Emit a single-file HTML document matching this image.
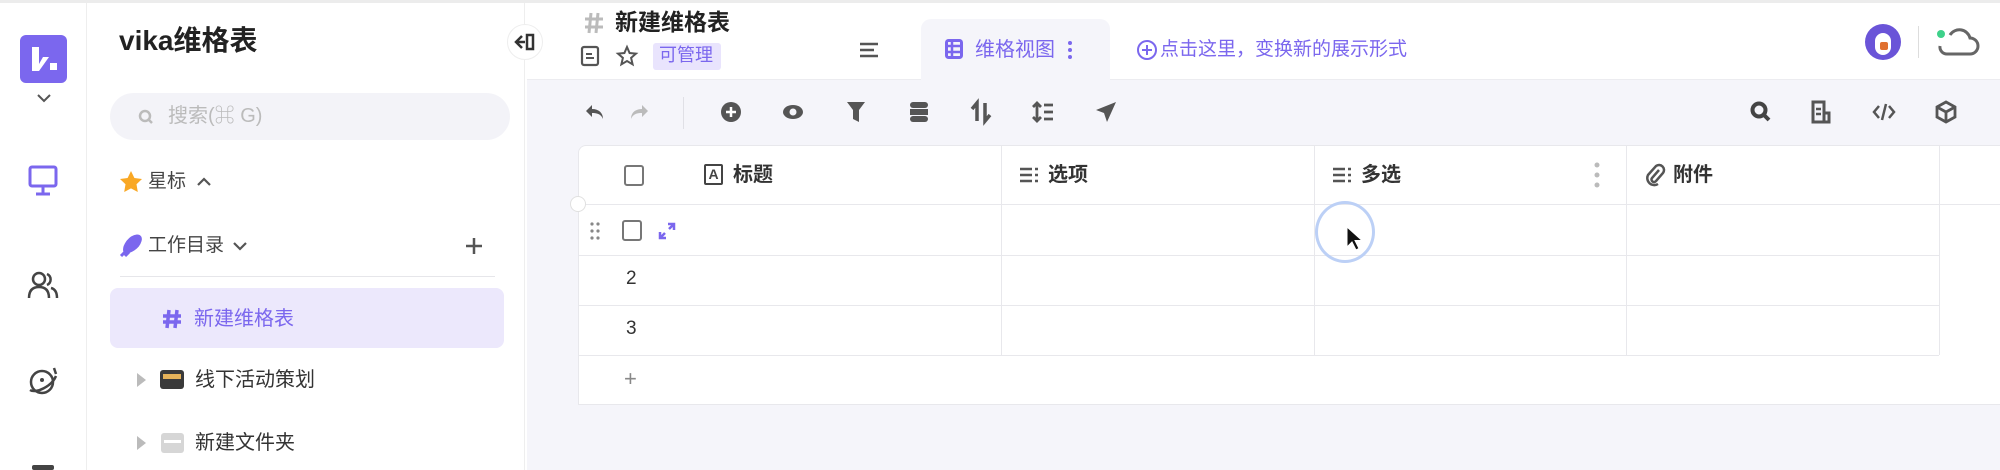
<!DOCTYPE html>
<html><head><meta charset="utf-8"><style>
*{box-sizing:border-box;margin:0;padding:0}
body{width:2000px;height:470px;overflow:hidden;background:#fff;font-family:"Liberation Sans","Noto Sans CJK SC",sans-serif;position:relative;color:#333}
.a{position:absolute}
.t{position:absolute;white-space:nowrap;line-height:1.2}
svg{position:absolute;overflow:visible}
</style></head><body>
<div class="a" style="left:0;top:0;width:2000px;height:3px;background:#ececec"></div>
<!-- rail -->
<div class="a" style="left:0;top:3px;width:87px;height:467px;background:#fff;border-right:1px solid #eee"></div>
<div class="a" style="left:20px;top:35px;width:47px;height:48px;background:#7b67ee;border-radius:6px"></div>
<svg style="left:20px;top:35px" width="47" height="48"><path d="M12 12v24h7l10-14h-6l-4 7V12z" fill="#fff"/><rect x="30" y="28" width="7" height="7" fill="#fff"/></svg>
<svg style="left:36px;top:93px" width="16" height="10"><path d="M2 2l6 6 6-6" stroke="#555" stroke-width="2" fill="none"/></svg>
<svg style="left:28px;top:165px" width="32" height="32"><rect x="2" y="2" width="26" height="19" rx="2" stroke="#7b67ee" stroke-width="3" fill="none"/><path d="M15 21v7M8 29h14" stroke="#7b67ee" stroke-width="3"/></svg>
<svg style="left:27px;top:270px" width="34" height="30"><circle cx="12" cy="9" r="6" stroke="#444" stroke-width="2.5" fill="none"/><path d="M2 28c0-8 4-11 10-11s10 3 10 11M20 4a6 6 0 0 1 0 11M24 18c4 1 6 4 6 10" stroke="#444" stroke-width="2.5" fill="none"/></svg>
<svg style="left:27px;top:364px" width="34" height="34"><circle cx="15" cy="18" r="11" stroke="#444" stroke-width="2.5" fill="none"/><path d="M3 26c6 4 22-4 26-14M27 4l2 6" stroke="#444" stroke-width="2.5" fill="none"/><circle cx="15" cy="16" r="2" fill="#444"/></svg>
<div class="a" style="left:32px;top:465px;width:22px;height:5px;background:#444;border-radius:2px"></div>
<!-- sidebar -->
<div class="a" style="left:87px;top:3px;width:438px;height:467px;background:#fff;border-right:1px solid #eee"></div>
<div class="t" style="left:119px;top:24px;font-size:28px;font-weight:bold;color:#222">vika维格表</div>
<div class="a" style="left:110px;top:93px;width:400px;height:47px;background:#f3f3f8;border-radius:24px"></div>
<svg style="left:138px;top:109px" width="16" height="16"><circle cx="7" cy="7" r="5" stroke="#bbb" stroke-width="2.5" fill="none"/><path d="M11 11l3 3" stroke="#bbb" stroke-width="2.5"/></svg>
<div class="t" style="left:168px;top:104px;font-size:20px;color:#bbb">搜索(⌘ G)</div>
<svg style="left:119px;top:170px" width="24" height="24"><path d="M12 1l3.4 7 7.6 1-5.5 5.3 1.3 7.7L12 18.4 5.2 22l1.3-7.7L1 9l7.6-1z" fill="#f9a825"/></svg>
<div class="t" style="left:148px;top:171px;font-size:19px;color:#444">星标</div>
<svg style="left:196px;top:177px" width="16" height="10"><path d="M2 8l6-6 6 6" stroke="#555" stroke-width="2.2" fill="none"/></svg>
<svg style="left:119px;top:234px" width="24" height="24"><path d="M6 18c-2-5 4-15 12-16 3 0 4 2 3 5-2 7-10 11-15 11zM2 22l6-6M6 22l4-4" stroke="#7b67ee" stroke-width="3" fill="#7b67ee"/></svg>
<div class="t" style="left:148px;top:235px;font-size:19px;color:#444">工作目录</div>
<svg style="left:232px;top:241px" width="16" height="10"><path d="M2 2l6 6 6-6" stroke="#555" stroke-width="2.2" fill="none"/></svg>
<svg style="left:465px;top:237px" width="18" height="18"><path d="M9 1v16M1 9h16" stroke="#555" stroke-width="2.5"/></svg>
<div class="a" style="left:120px;top:276px;width:375px;height:1px;background:#e6e6ea"></div>
<div class="a" style="left:110px;top:288px;width:394px;height:60px;background:#ece8fc;border-radius:8px"></div>
<svg style="left:162px;top:309px" width="20" height="20"><path d="M7 1L5 19M15 1l-2 18M1 7h18M1 13h18" stroke="#7b67ee" stroke-width="3.5"/></svg>
<div class="t" style="left:194px;top:307px;font-size:20px;color:#7b67ee">新建维格表</div>
<svg style="left:137px;top:373px" width="10" height="14"><path d="M0 0l9 7-9 7z" fill="#bbb"/></svg>
<div class="a" style="left:160px;top:370px;width:24px;height:19px;background:#3a3a3a;border-radius:3px"></div>
<div class="a" style="left:163px;top:374px;width:18px;height:5px;background:#e6b35a"></div>
<div class="t" style="left:195px;top:368px;font-size:20px;color:#333">线下活动策划</div>
<svg style="left:137px;top:436px" width="10" height="14"><path d="M0 0l9 7-9 7z" fill="#bbb"/></svg>
<div class="a" style="left:161px;top:433px;width:23px;height:20px;background:#d6d6d6;border-radius:3px"></div>
<div class="a" style="left:164px;top:440px;width:17px;height:3px;background:#fff"></div>
<div class="t" style="left:195px;top:431px;font-size:20px;color:#333">新建文件夹</div>
<div class="a" style="left:507px;top:24px;width:36px;height:36px;border-radius:50%;background:#fff;border:1px solid #eee"></div>
<svg style="left:514px;top:33px" width="22" height="18"><path d="M8 3L2 9l6 6M2 9h9" stroke="#333" stroke-width="2.5" fill="none"/><rect x="13" y="2" width="6" height="14" stroke="#333" stroke-width="2.5" fill="none"/></svg>
<!-- main -->
<div class="a" style="left:527px;top:79px;width:1473px;height:391px;background:#f5f5fa;border-top:1px solid #ececf0"></div>
<svg style="left:584px;top:12px" width="20" height="22"><path d="M7 1L5 21M14 1l-2 20M1 7h18M1 15h18" stroke="#bbb" stroke-width="3"/></svg>
<div class="t" style="left:615px;top:9px;font-size:23px;font-weight:bold;color:#222">新建维格表</div>
<svg style="left:580px;top:45px" width="20" height="22"><rect x="2" y="2" width="16" height="18" rx="2" stroke="#555" stroke-width="2.2" fill="none"/><path d="M6 9h6M6 13h8" stroke="#555" stroke-width="2"/></svg>
<svg style="left:616px;top:45px" width="22" height="22"><path d="M11 2l2.6 6 6.4.6-4.9 4.3 1.5 6.4L11 16l-5.6 3.3 1.5-6.4L2 8.6 8.4 8z" stroke="#555" stroke-width="2" fill="none"/></svg>
<div class="a" style="left:653px;top:43px;width:68px;height:27px;background:#e9e4fd;border-radius:3px"></div>
<div class="t" style="left:659px;top:45px;font-size:18px;color:#7b67ee">可管理</div>
<svg style="left:860px;top:42px" width="18" height="16"><path d="M0 2h18M0 8h14M0 14h18" stroke="#555" stroke-width="2.5"/></svg>
<div class="a" style="left:921px;top:19px;width:189px;height:61px;background:#f5f5fa;border-radius:10px 10px 0 0"></div>
<svg style="left:945px;top:39px" width="18" height="20"><rect x="1.5" y="1.5" width="15" height="17" rx="2" stroke="#7b67ee" stroke-width="3" fill="none"/><path d="M1 7h16M1 13h16M7 2v16" stroke="#7b67ee" stroke-width="2.5"/></svg>
<div class="t" style="left:975px;top:38px;font-size:20px;color:#7b67ee">维格视图</div>
<svg style="left:1068px;top:40px" width="4" height="20"><circle cx="2" cy="3" r="2" fill="#7b67ee"/><circle cx="2" cy="10" r="2" fill="#7b67ee"/><circle cx="2" cy="17" r="2" fill="#7b67ee"/></svg>
<svg style="left:1136px;top:39px" width="22" height="22"><circle cx="11" cy="11" r="9" stroke="#7b67ee" stroke-width="2" fill="none"/><path d="M11 6v10M6 11h10" stroke="#7b67ee" stroke-width="2"/></svg>
<div class="t" style="left:1160px;top:39px;font-size:19px;color:#7b67ee">点击这里，变换新的展示形式</div>
<div class="a" style="left:1865px;top:24px;width:36px;height:36px;border-radius:50%;background:#6a54d8"></div>
<div class="a" style="left:1875px;top:33px;width:16px;height:22px;border-radius:8px;background:#fff"></div>
<div class="a" style="left:1880px;top:42px;width:8px;height:8px;background:#e07030;border-radius:2px"></div>
<div class="a" style="left:1918px;top:26px;width:1px;height:32px;background:#ddd"></div>
<svg style="left:1936px;top:28px" width="44" height="30"><path d="M4 18a7 7 0 0 0 7 8h23a8 8 0 0 0 0-16 11 11 0 0 0-20-3" stroke="#666" stroke-width="3" fill="none"/><circle cx="5" cy="6" r="4" fill="#3ed18a"/></svg>
<!-- toolbar -->
<svg style="left:584px;top:103px" width="20" height="18"><path d="M8 2L2 8l6 6V10c5 0 9 1 11 6 0-6-4-10-11-10z" fill="#555"/></svg>
<svg style="left:630px;top:103px" width="20" height="18"><path d="M12 2l6 6-6 6V10c-5 0-9 1-11 6 0-6 4-10 11-10z" fill="#bbb"/></svg>
<div class="a" style="left:683px;top:97px;width:1px;height:32px;background:#e0e0e6"></div>
<svg style="left:720px;top:101px" width="22" height="22"><circle cx="11" cy="11" r="10" fill="#555"/><path d="M11 6v10M6 11h10" stroke="#fff" stroke-width="2.5"/></svg>
<svg style="left:782px;top:104px" width="22" height="16"><ellipse cx="11" cy="8" rx="10" ry="7" fill="#555"/><circle cx="11" cy="8" r="3.5" fill="#f5f5fa"/></svg>
<svg style="left:847px;top:102px" width="18" height="20"><path d="M0 0h18l-6 8v12l-6-3V8z" fill="#555"/></svg>
<svg style="left:910px;top:102px" width="18" height="20"><rect x="0" y="0" width="18" height="6" rx="3" fill="#555"/><rect x="0" y="7" width="18" height="6" fill="#555"/><rect x="0" y="14" width="18" height="6" rx="3" fill="#555"/></svg>
<svg style="left:971px;top:101px" width="20" height="22"><path d="M6 20V2L1 8M14 2v18l5-6" stroke="#555" stroke-width="3.5" fill="none"/></svg>
<svg style="left:1032px;top:101px" width="22" height="22"><path d="M5 2v18M1 6l4-4 4 4M1 16l4 4 4-4M12 4h9M12 11h9M12 18h9" stroke="#555" stroke-width="2.8" fill="none"/></svg>
<svg style="left:1096px;top:102px" width="20" height="20"><path d="M20 0L0 8l8 3 3 9z" fill="#555"/></svg>
<svg style="left:1750px;top:101px" width="22" height="22"><circle cx="9" cy="9" r="6.5" stroke="#444" stroke-width="4" fill="none"/><path d="M13 13l6 6" stroke="#444" stroke-width="4"/></svg>
<svg style="left:1811px;top:100px" width="22" height="24"><path d="M2 2h11v20H2zM13 13h5v9h-5" stroke="#555" stroke-width="3" fill="none"/><path d="M5 9h5M5 14h5" stroke="#555" stroke-width="2.5"/></svg>
<svg style="left:1873px;top:103px" width="22" height="18"><path d="M6 3L1 9l5 6M16 3l5 6-5 6M13 1L9 17" stroke="#555" stroke-width="2.5" fill="none"/></svg>
<svg style="left:1935px;top:100px" width="22" height="24"><path d="M11 2l9 5v10l-9 5-9-5V7zM2 7l9 5 9-5M11 12v10" stroke="#555" stroke-width="2.8" fill="none"/></svg>
<!-- table -->
<div class="a" style="left:578px;top:145px;width:1422px;height:260px;background:#fff;border:1px solid #e8e8ec;border-right:none;border-radius:8px 0 0 0"></div>
<div class="a" style="left:578px;top:204px;width:1422px;height:1px;background:#e8e8ec"></div>
<div class="a" style="left:578px;top:255px;width:1361px;height:1px;background:#e8e8ec"></div>
<div class="a" style="left:578px;top:305px;width:1361px;height:1px;background:#e8e8ec"></div>
<div class="a" style="left:578px;top:355px;width:1361px;height:1px;background:#e8e8ec"></div>
<div class="a" style="left:1001px;top:145px;width:1px;height:210px;background:#e8e8ec"></div>
<div class="a" style="left:1314px;top:145px;width:1px;height:210px;background:#e8e8ec"></div>
<div class="a" style="left:1626px;top:145px;width:1px;height:210px;background:#e8e8ec"></div>
<div class="a" style="left:1939px;top:145px;width:1px;height:210px;background:#e8e8ec"></div>
<div class="a" style="left:624px;top:165px;width:20px;height:21px;border:2px solid #777;border-radius:3px"></div>
<div class="a" style="left:704px;top:164px;width:19px;height:21px;border:2px solid #444;border-radius:2px;font-size:14px;font-weight:bold;line-height:17px;text-align:center;color:#444">A</div>
<div class="t" style="left:733px;top:163px;font-size:20px;font-weight:bold;color:#333">标题</div>
<svg style="left:1020px;top:167px" width="20" height="16"><path d="M0 2h12M0 8h12M0 14h12M15 2h3M15 8h3M15 14h3" stroke="#555" stroke-width="2.5"/></svg>
<div class="t" style="left:1048px;top:163px;font-size:20px;font-weight:bold;color:#333">选项</div>
<svg style="left:1333px;top:167px" width="20" height="16"><path d="M0 2h12M0 8h12M0 14h12M15 2h3M15 8h3M15 14h3" stroke="#555" stroke-width="2.5"/></svg>
<div class="t" style="left:1361px;top:163px;font-size:20px;font-weight:bold;color:#333">多选</div>
<svg style="left:1594px;top:162px" width="6" height="26"><circle cx="3" cy="3" r="2.5" fill="#bbb"/><circle cx="3" cy="13" r="2.5" fill="#bbb"/><circle cx="3" cy="23" r="2.5" fill="#bbb"/></svg>
<svg style="left:1645px;top:164px" width="20" height="22"><path d="M14 6l-7 8a2.5 2.5 0 0 0 4 3l7-8a5 5 0 0 0-7-7L3 11a7 7 0 0 0 10 9" stroke="#555" stroke-width="2.5" fill="none"/></svg>
<div class="t" style="left:1673px;top:163px;font-size:20px;font-weight:bold;color:#333">附件</div>
<div class="a" style="left:570px;top:196px;width:16px;height:16px;border-radius:50%;background:#fff;border:1px solid #e0e0e0"></div>
<svg style="left:590px;top:222px" width="10" height="18"><g fill="#888"><circle cx="2" cy="2" r="1.6"/><circle cx="8" cy="2" r="1.6"/><circle cx="2" cy="9" r="1.6"/><circle cx="8" cy="9" r="1.6"/><circle cx="2" cy="16" r="1.6"/><circle cx="8" cy="16" r="1.6"/></g></svg>
<div class="a" style="left:622px;top:220px;width:20px;height:21px;border:2px solid #777;border-radius:3px"></div>
<svg style="left:658px;top:222px" width="18" height="18"><path d="M10 2h6v6M16 2l-5 5M8 16H2v-6M2 16l5-5" stroke="#7b67ee" stroke-width="2.5" fill="none"/></svg>
<div class="t" style="left:626px;top:268px;font-size:19px;color:#333">2</div>
<div class="t" style="left:626px;top:318px;font-size:19px;color:#333">3</div>
<div class="t" style="left:624px;top:366px;font-size:22px;color:#888">+</div>
<div class="a" style="left:1315px;top:201px;width:60px;height:62px;border-radius:50%;border:3px solid #bcd0f6"></div>
<svg style="left:1346px;top:226px" width="16" height="26"><path d="M1 1v20l5-5 4 8 3-1.5-4-8h7z" fill="#111" stroke="#fff" stroke-width="1"/></svg>
</body></html>
